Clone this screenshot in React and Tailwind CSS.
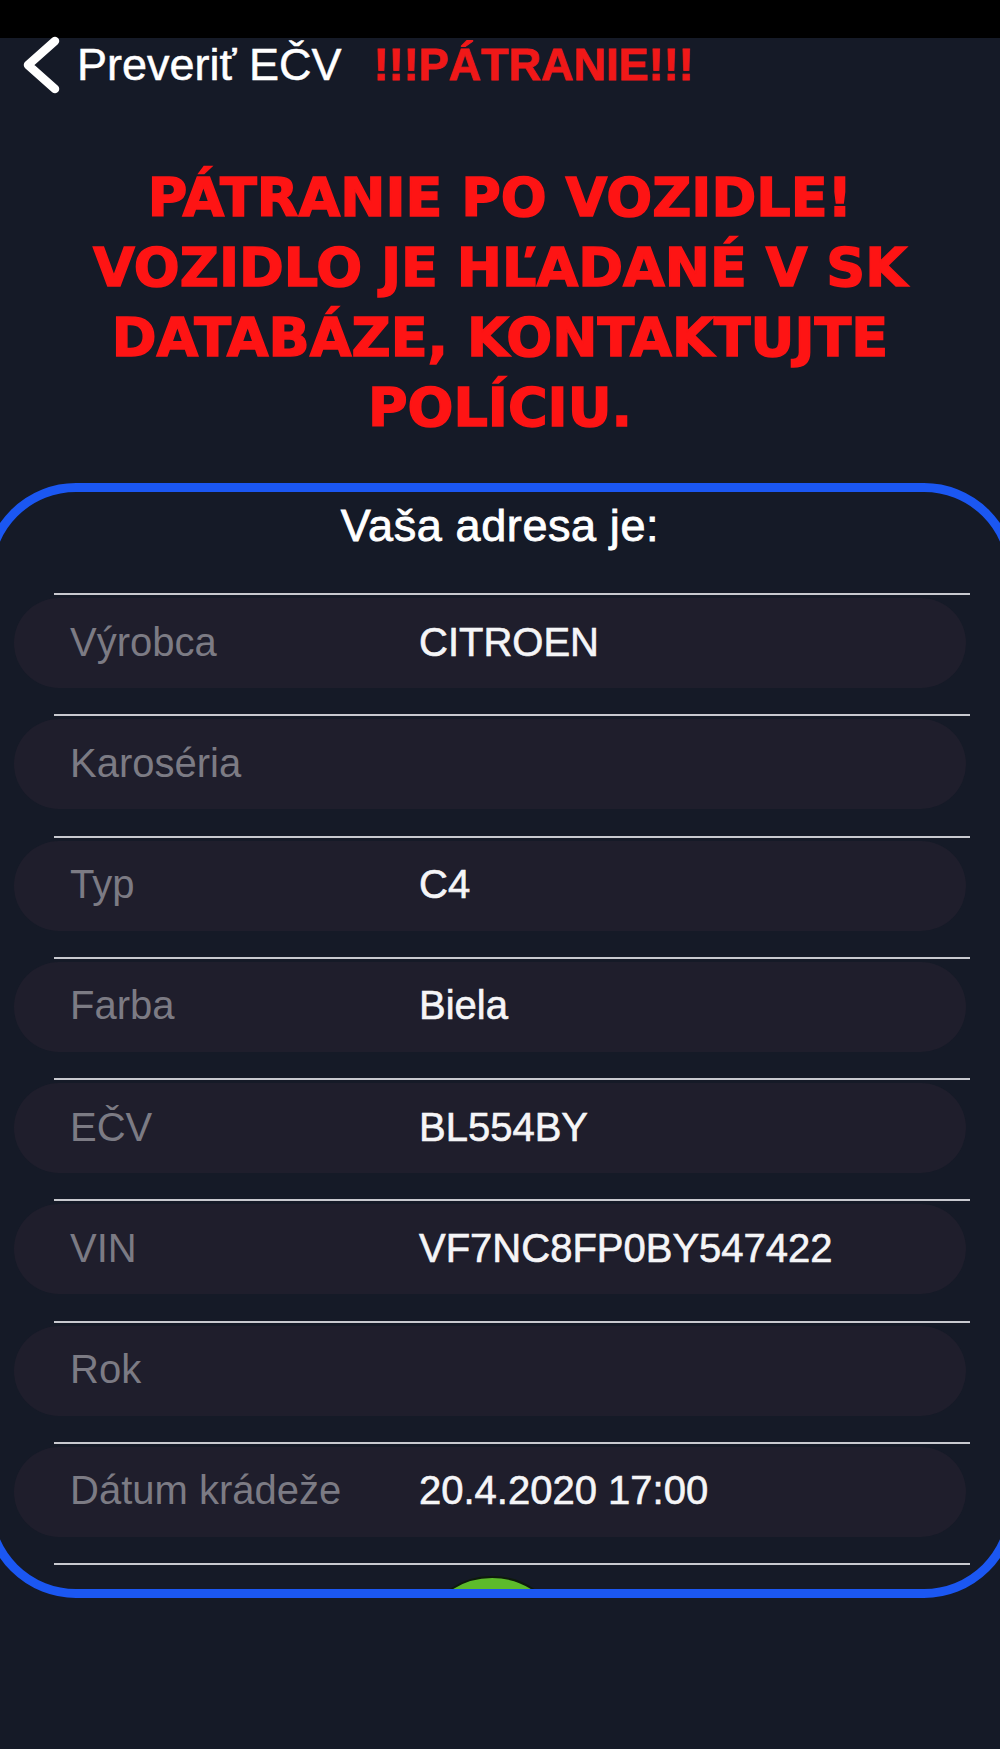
import React from 'react';

const rows = [
  { label: 'Výrobca', value: 'CITROEN' },
  { label: 'Karoséria', value: '' },
  { label: 'Typ', value: 'C4' },
  { label: 'Farba', value: 'Biela' },
  { label: 'EČV', value: 'BL554BY' },
  { label: 'VIN', value: 'VF7NC8FP0BY547422' },
  { label: 'Rok', value: '' },
  { label: 'Dátum krádeže', value: '20.4.2020 17:00' },
];

const Separator = () => <div className="ml-[61px] mr-[37px] h-[2px] bg-[#c8c9cf]" />;

const InfoRow = ({ label, value }) => (
  <div>
    <Separator />
    <div className="ml-[21px] mr-[41px] mt-[3px] h-[90px] rounded-full bg-[#1f1e2c] flex items-center text-[40px] leading-none pb-[3px]">
      <span className="w-[405px] shrink-0 pl-[56px] text-[#7c7b84]">{label}</span>
      <span className="text-[#f5f5f7] [-webkit-text-stroke:0.6px_#f5f5f7]">{value}</span>
    </div>
    <div className="h-[26.25px]" />
  </div>
);

const App = () => {
  return (
    <div className="w-[1000px] h-[1749px] bg-[#151a27] overflow-hidden font-['Liberation_Sans',Arial,sans-serif]">
      <div className="h-[38px] bg-black" />

      {/* nav bar */}
      <div className="mt-[2px] h-[50px] flex items-center">
        <svg width="40" height="60" viewBox="0 0 40 60" className="ml-[20px] shrink-0">
          <polyline points="35,6 8,30 35,54" fill="none" stroke="#fff" strokeWidth="8.5" strokeLinecap="round" strokeLinejoin="round" />
        </svg>
        <span className="ml-[17px] text-[45px] leading-[50px] text-white [-webkit-text-stroke:0.5px_#fff]">Preveriť EČV</span>
        <span className="ml-[32px] text-[45px] leading-[50px] font-bold text-[#f01818] [-webkit-text-stroke:0.8px_#f01818]">!!!PÁTRANIE!!!</span>
      </div>

      {/* alert */}
      <div className="mt-[73px] text-center text-[54px] leading-[70px] font-bold text-[#fe1414] font-['DejaVu_Sans',sans-serif] [-webkit-text-stroke:1.5px_#fe1414]">
        <div>PÁTRANIE PO VOZIDLE!</div>
        <div>VOZIDLO JE HĽADANÉ V SK</div>
        <div>DATABÁZE, KONTAKTUJTE</div>
        <div>POLÍCIU.</div>
      </div>

      {/* result card */}
      <div className="mx-[-16px] mt-[40px] rounded-[92px] border-[9px] border-[#1b57f2] overflow-hidden bg-[#151a27]">
        <div className="mt-[9px] h-[50px] leading-[50px] text-center text-[45px] tracking-[0.6px] text-white [-webkit-text-stroke:0.8px_#fff]">
          Vaša adresa je:
        </div>
        <div className="mt-[42px]">
          {rows.map((r) => (
            <InfoRow key={r.label} label={r.label} value={r.value} />
          ))}
          <Separator />
          <div className="h-[24px] overflow-hidden pl-[424px] pt-[11px]">
            <div className="w-[150px] h-[150px] rounded-full bg-[#5dbb2c] border-2 border-[#0d1a0c]" />
          </div>
        </div>
      </div>
    </div>
  );
};

export default App;
